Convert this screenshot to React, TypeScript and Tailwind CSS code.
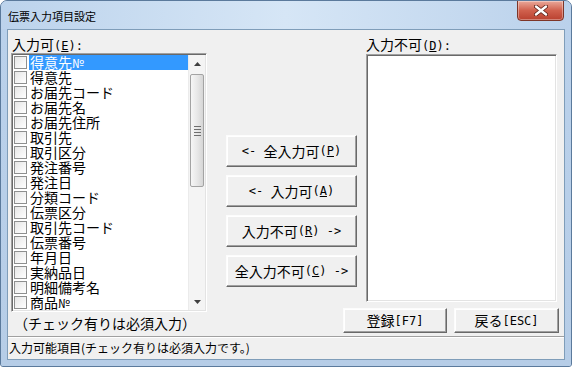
import React from "react";

const FONT = "font-['Noto_Sans_CJK_JP','Noto_Sans_CJK_SC',sans-serif]";

function H({ children }: { children: React.ReactNode }) {
  return <span className="font-['DejaVu_Sans_Mono',monospace] text-[12px]">{children}</span>;
}

const items: React.ReactNode[] = [
  <>得意先<span className="text-[12px]">№</span></>,
  "得意先",
  "お届先コード",
  "お届先名",
  "お届先住所",
  "取引先",
  "取引区分",
  "発注番号",
  "発注日",
  "分類コード",
  "伝票区分",
  "取引先コード",
  "伝票番号",
  "年月日",
  "実納品日",
  "明細備考名",
  <>商品<span className="text-[12px]">№</span></>,
];

function Btn({ children, className }: { children: React.ReactNode; className: string }) {
  return (
    <div
      className={
        "flex items-center justify-center bg-[#f0f0f0] border border-t-[#fcfcfc] border-l-[#fcfcfc] border-r-[#696969] border-b-[#696969] shadow-[inset_-1px_-1px_0_#a0a0a0,inset_1px_1px_0_#ffffff] text-[14px] text-black whitespace-pre " +
        className
      }
    >
      {children}
    </div>
  );
}

function Arrow({ up }: { up: boolean }) {
  return (
    <svg width="7" height="4" viewBox="0 0 7 4">
      {up ? <polygon points="0,4 7,4 3.5,0" fill="#404040" /> : <polygon points="0,0 7,0 3.5,4" fill="#404040" />}
    </svg>
  );
}

export default function App() {
  return (
    <div className={"w-[572px] h-[367px] bg-[#b9d1ea] border border-[#5b7a9c] rounded-t-[7px] rounded-b-[3px] flex flex-col overflow-hidden " + FONT}>
      {/* title bar */}
      <div className="h-[28px] flex items-start pl-[7px] pr-[7px] bg-gradient-to-r from-[#bcd3ec] via-[#d6e6f6] to-[#bad1eb]">
        <div className="mt-[7px] text-[11px] leading-[16px] text-black flex-1">伝票入力項目設定</div>
        <div className="-mt-px h-[21px] w-[47px] rounded-b-[4px] border border-[#7d3528] bg-gradient-to-b from-[#e9a89a] via-[#d0604d] to-[#b9402f] flex items-center justify-center shadow-[inset_0_0_0_1px_rgba(255,255,255,0.35)]">
          <svg width="14" height="11" viewBox="0 0 14 11">
            <path d="M2 1.5 L12 9.5 M12 1.5 L2 9.5" stroke="#5a1f16" strokeWidth="4" strokeLinecap="round" />
            <path d="M2 1.5 L12 9.5 M12 1.5 L2 9.5" stroke="#ffffff" strokeWidth="2.4" strokeLinecap="round" />
          </svg>
        </div>
      </div>
      {/* frame sides */}
      <div className="px-[6px] pb-[6px] bg-gradient-to-b from-[#bad1eb] to-[#b6cde7]">
        <div className="border border-[#7f9db9] bg-[#f0f0f0] w-[558px] h-[331px] flex flex-col">
          <div className="flex h-[306px]">
            {/* left column */}
            <div className="pl-[3px] w-[199px] flex flex-col">
              <div className="mt-[5px] h-[18px] leading-[18px] pl-[1px] text-[14px] text-black whitespace-pre">
                入力可<H>(<span className="underline">E</span>):</H>
              </div>
              <div className="w-[196px] h-[259px] border border-t-[#a0a0a0] border-l-[#a0a0a0] border-r-[#ffffff] border-b-[#ffffff] p-px shadow-[inset_1px_1px_0_#696969,inset_-1px_-1px_0_#e3e3e3]">
                <div className="flex h-full bg-white">
                  <div className="flex-1 flex flex-col overflow-hidden">
                    {items.map((t, i) => (
                      <div key={i} className="flex h-[15px] items-center">
                        <div className="ml-[1px] w-[13px] h-[13px] border border-[#8e8f8f] bg-gradient-to-br from-[#e6e6e6] to-[#ffffff] shrink-0" />
                        <div
                          className={
                            "ml-[2px] pl-[1px] flex-1 h-[15px] leading-[15px] text-[14px] " +
                            (i === 0 ? "bg-[#3399ff] text-white" : "text-black")
                          }
                        >
                          {t}
                        </div>
                      </div>
                    ))}
                  </div>
                  {/* scrollbar */}
                  <div className="w-[17px] h-full flex flex-col bg-[#f4f4f4] border-l border-[#ebebeb]">
                    <div className="h-[17px] flex items-center justify-center">
                      <Arrow up={true} />
                    </div>
                    <div className="mt-[2px] mx-[1px] h-[113px] rounded-[2px] border border-[#a3a3a3] bg-gradient-to-r from-[#f6f6f6] via-[#e8e8e8] to-[#d6d6d6] flex flex-col items-center justify-center gap-[2px]">
                      <div className="w-[7px] h-px bg-[#6e6e6e]" />
                      <div className="w-[7px] h-px bg-[#6e6e6e]" />
                      <div className="w-[7px] h-px bg-[#6e6e6e]" />
                      <div className="w-[7px] h-px bg-[#6e6e6e]" />
                    </div>
                    <div className="flex-1" />
                    <div className="h-[17px] flex items-center justify-center">
                      <Arrow up={false} />
                    </div>
                  </div>
                </div>
              </div>
              <div className="mt-[3px] pl-[3px] leading-[17px] text-[14px] text-black whitespace-nowrap">（チェック有りは必須入力）</div>
            </div>
            {/* right side */}
            <div className="w-[357px] flex flex-col">
              <div className="flex h-[278px]">
                <div className="ml-[19px] w-[131px] pt-[105px] flex flex-col gap-[8px]">
                  <Btn className="h-[32px]">
                    <H>{"<- "}</H>全入力可<H>(<span className="underline">P</span>)</H>
                  </Btn>
                  <Btn className="h-[32px]">
                    <H>{"<- "}</H>入力可<H>(<span className="underline">A</span>)</H>
                  </Btn>
                  <Btn className="h-[32px]">
                    入力不可<H>(<span className="underline">R</span>){" ->"}</H>
                  </Btn>
                  <Btn className="h-[32px]">
                    全入力不可<H>(<span className="underline">C</span>){" ->"}</H>
                  </Btn>
                </div>
                <div className="ml-[9px] w-[191px] flex flex-col">
                  <div className="mt-[5px] h-[19px] leading-[18px] text-[14px] text-black whitespace-pre">
                    入力不可<H>(<span className="underline">D</span>):</H>
                  </div>
                  <div className="w-[191px] h-[248px] border border-t-[#a0a0a0] border-l-[#a0a0a0] border-r-[#ffffff] border-b-[#ffffff] p-px shadow-[inset_1px_1px_0_#696969,inset_-1px_-1px_0_#e3e3e3]">
                    <div className="w-full h-full bg-white" />
                  </div>
                </div>
              </div>
              <div className="flex justify-end gap-[7px] pr-[5px]">
                <Btn className="h-[25px] w-[104px]">
                  登録<H>[F7]</H>
                </Btn>
                <Btn className="h-[25px] w-[105px]">
                  戻る<H>[ESC]</H>
                </Btn>
              </div>
            </div>
          </div>
          <div className="flex-1 border-t border-[#a0a0a0] shadow-[inset_0_1px_0_#ffffff] pl-[1px] text-[12px] leading-[22px] text-black whitespace-nowrap">
            入力可能項目(チェック有りは必須入力です。)
          </div>
        </div>
      </div>
    </div>
  );
}
